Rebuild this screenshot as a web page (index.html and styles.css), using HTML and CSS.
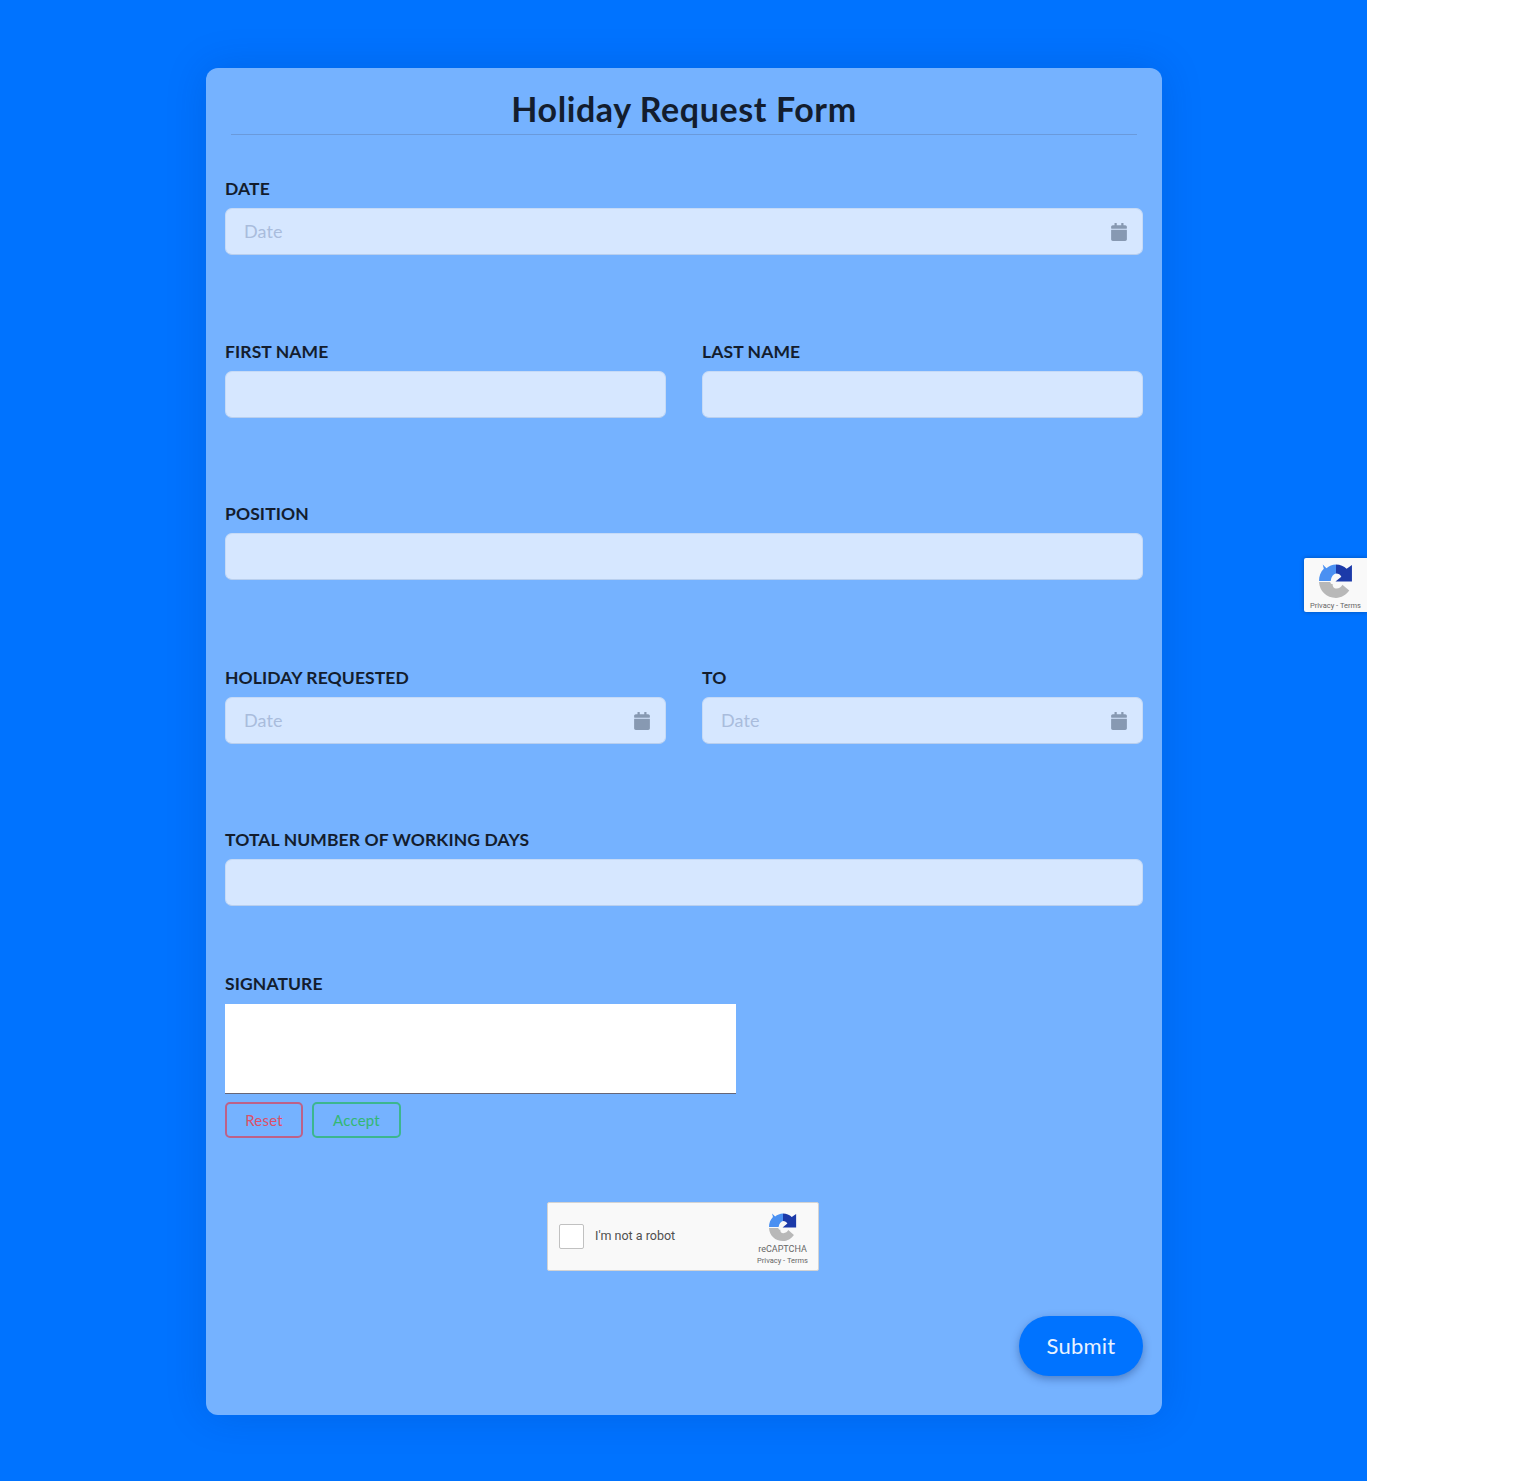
FILE: index.html
```html
<!DOCTYPE html>
<html lang="en">
<head>
    <meta charset="UTF-8">
    <title>Holiday Request Form</title>
    <link rel="stylesheet" href="styles.css">
</head>
<body>
    <svg class="defs" width="0" height="0">
        <symbol id="calendar" viewBox="0 0 448 512">
            <path d="M12 192h424c6.6 0 12 5.4 12 12v260c0 26.5-21.5 48-48 48H48c-26.5 0-48-21.5-48-48V204c0-6.6 5.4-12 12-12zm436-44v-36c0-26.5-21.5-48-48-48h-48V12c0-6.6-5.4-12-12-12h-40c-6.6 0-12 5.4-12 12v52H160V12c0-6.6-5.4-12-12-12h-40c-6.6 0-12 5.4-12 12v52H48C21.5 64 0 85.5 0 112v36c0 6.6 5.4 12 12 12h424c6.6 0 12-5.4 12-12z"/>
        </symbol>
        <symbol id="recaptcha" viewBox="0 0 64 64">
            <path fill="#b8b8b8" d="M0 34H21C22 37 23 38 26 38C25 42 28 46 33 46C38 46 42 43 44 39L57 50C51 58 42 64 32 64C14 64 1 51 0 34z"/>
            <path fill="#4a90f2" d="M7 1L14 8C19 4 25 1 32 1V18C27 19 23 24 22 32H0C0 23 3 15 9 9z"/>
            <path fill="#1c3aa9" d="M32 1C40 1 47 4 52 9L62 2V33H31L42 24C40 20 37 18 32 18z"/>
        </symbol>
    </svg>
    <div class="page">
        <form class="card">
            <h1 class="title">Holiday Request Form</h1>

            <div class="group date">
                <label>DATE</label>
                <div class="input"><span class="placeholder">Date</span><svg class="cal"><use href="#calendar"/></svg></div>
            </div>

            <div class="group row">
                <div class="col">
                    <label>FIRST NAME</label>
                    <div class="input"></div>
                </div>
                <div class="col">
                    <label>LAST NAME</label>
                    <div class="input"></div>
                </div>
            </div>

            <div class="group position">
                <label>POSITION</label>
                <div class="input"></div>
            </div>

            <div class="group row">
                <div class="col">
                    <label>HOLIDAY REQUESTED</label>
                    <div class="input"><span class="placeholder">Date</span><svg class="cal"><use href="#calendar"/></svg></div>
                </div>
                <div class="col">
                    <label>TO</label>
                    <div class="input"><span class="placeholder">Date</span><svg class="cal"><use href="#calendar"/></svg></div>
                </div>
            </div>

            <div class="group days">
                <label>TOTAL NUMBER OF WORKING DAYS</label>
                <div class="input"></div>
            </div>

            <div class="signature">
                <label>SIGNATURE</label>
                <div class="pad"></div>
                <div class="pad-buttons">
                    <button type="button" class="reset">Reset</button>
                    <button type="button" class="accept">Accept</button>
                </div>
            </div>

            <div class="captcha">
                <span class="box"></span>
                <span class="robot">I'm not a robot</span>
                <div class="brand">
                    <svg class="logo"><use href="#recaptcha"/></svg>
                    <span class="name">reCAPTCHA</span>
                    <span class="links">Privacy - Terms</span>
                </div>
            </div>

            <div class="actions">
                <button type="button" class="submit">Submit</button>
            </div>
        </form>

        <div class="badge">
            <svg class="badge-logo"><use href="#recaptcha"/></svg>
            <span class="links">Privacy - Terms</span>
        </div>
    </div>
</body>
</html>
```

FILE: styles.css
```css
* {
    box-sizing: border-box;
}
body {
    margin: 0;
    font-family: "Lato", "Noto Sans", sans-serif;
    color: #131d2e;
}
.defs {
    position: absolute;
}
.page {
    position: relative;
    width: 1367px;
    height: 1481px;
    padding-top: 68px;
    padding-left: 206px;
    background-color: #0073ff;
    overflow: hidden;
}
.card {
    width: 956px;
    height: 1347px;
    padding: 0 19px;
    background-color: #75b2ff;
    border-radius: 12px;
    box-shadow: 0 0 40px rgba(0, 40, 120, 0.18);
}
.title {
    height: 67px;
    margin: 0 6px 44px;
    padding-top: 21px;
    border-bottom: 1px solid #6a9adb;
    font-size: 34px;
    line-height: 40px;
    font-weight: 700;
    text-align: center;
    letter-spacing: 0.6px;
}
label {
    display: block;
    height: 29px;
    font-size: 17.5px;
    line-height: 20px;
    font-weight: 700;
    letter-spacing: 0.1px;
}
.group {
    margin-bottom: 86px;
}
.group.date {
    margin-bottom: 87px;
}
.group.position {
    margin-bottom: 88px;
}
.group.days {
    margin-bottom: 68px;
}
.row {
    display: flex;
    gap: 36px;
}
.col {
    flex: 1;
}
.input {
    display: flex;
    align-items: center;
    justify-content: space-between;
    height: 47px;
    padding: 0 15px 0 18px;
    background-color: #d6e7ff;
    border: 1px solid #c6daf6;
    border-bottom-color: #b9cfee;
    border-radius: 7px;
}
.placeholder {
    padding-bottom: 2px;
    font-size: 18px;
    letter-spacing: 0.1px;
    color: #a9bcdc;
}
.cal {
    width: 16px;
    height: 18px;
    fill: #8799b2;
}
.signature label {
    height: 30px;
}
.pad {
    width: 511px;
    height: 90px;
    background-color: #fff;
    border-bottom: 1px solid #667;
}
.pad-buttons {
    display: flex;
    gap: 9px;
    margin-top: 8px;
}
.pad-buttons button {
    height: 36px;
    background: none;
    border-width: 2px;
    border-style: solid;
    border-radius: 5px;
    font-family: inherit;
    font-size: 15px;
    letter-spacing: 0.2px;
}
.reset {
    width: 78px;
    color: #dc5068;
    border-color: rgba(214, 70, 96, 0.75);
}
.accept {
    width: 89px;
    color: #33b873;
    border-color: rgba(46, 182, 114, 0.8);
}
.captcha {
    position: relative;
    display: flex;
    align-items: center;
    width: 272px;
    height: 69px;
    margin: 64px 0 45px 322px;
    padding-left: 11px;
    background-color: #f9f9f9;
    border: 1px solid #d3d3d3;
    border-radius: 2px;
    font-family: "Roboto", sans-serif;
}
.box {
    width: 25px;
    height: 25px;
    margin-bottom: 1px;
    background-color: #fff;
    border: 1px solid #c1c1c1;
    border-radius: 2px;
}
.robot {
    margin-left: 11px;
    margin-bottom: 3px;
    font-size: 12.5px;
    color: #4f4f4f;
}
.brand {
    position: absolute;
    top: 10px;
    right: 10px;
    display: flex;
    flex-direction: column;
    align-items: center;
    color: #666;
}
.logo {
    width: 28px;
    height: 28px;
}
.name {
    margin-top: 3px;
    font-size: 9px;
    line-height: 11px;
}
.links {
    font-family: "Roboto", sans-serif;
    font-size: 7.5px;
    line-height: 11px;
    color: #666;
}
.actions {
    display: flex;
    justify-content: flex-end;
}
.submit {
    width: 124px;
    height: 60px;
    padding-bottom: 3px;
    background-color: #0073ff;
    border: none;
    border-radius: 30px;
    box-shadow: 0 3px 8px rgba(0, 30, 90, 0.35);
    color: #e8f2ff;
    font-family: inherit;
    font-size: 22px;
    letter-spacing: 0.2px;
}
.badge {
    position: absolute;
    top: 558px;
    left: 1304px;
    display: flex;
    flex-direction: column;
    align-items: center;
    width: 63px;
    height: 54px;
    padding-top: 6px;
    background-color: #f9f9f9;
    border-radius: 2px 0 0 2px;
    box-shadow: 0 0 4px rgba(0, 0, 0, 0.3);
}
.badge-logo {
    width: 34px;
    height: 34px;
    margin-bottom: 2px;
}
```
